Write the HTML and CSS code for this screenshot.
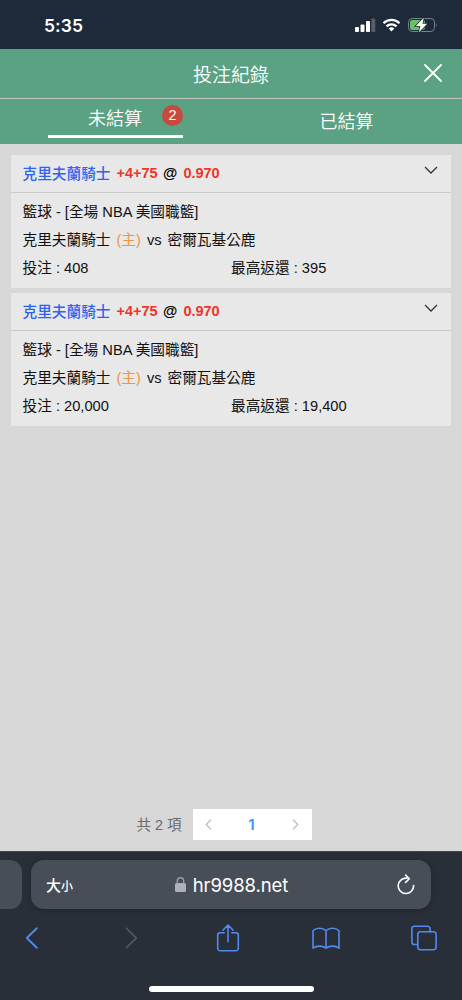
FILE: index.html
```html
<!DOCTYPE html>
<html lang="zh-Hant">
<head>
<meta charset="utf-8">
<title>投注紀錄</title>
<link rel="stylesheet" href="styles.css">
</head>
<body>
<div class="phone">
  <div class="status">
    <span class="clock">5:35</span>
    <svg class="status-icons" width="84" height="18" viewBox="0 0 84 18">
      <g fill="#fff">
        <rect x="1" y="11" width="4" height="5" rx="1"/>
        <rect x="6.500" y="8.500" width="4" height="7.500" rx="1"/>
        <rect x="12" y="5" width="4" height="11" rx="1"/>
        <rect x="17.300" y="2.500" width="4" height="13.500" rx="1" opacity=".25"/>
      </g>
      <g fill="none" stroke="#fff" stroke-width="2.300">
        <path d="M29.500 7.200A11.300 11.300 0 0 1 45.500 7.200"/>
        <path d="M32.500 10.400A7.100 7.100 0 0 1 42.500 10.400"/>
      </g>
      <path d="M34.700 12.500Q37.500 10.200 40.300 12.500L37.500 15.500Z" fill="#fff"/>
      <rect x="54.500" y="2.500" width="26" height="13" rx="3.800" fill="none" stroke="#7b838d"/>
      <path d="M82.300 7Q83.800 9 82.300 11Z" fill="#7b838d"/>
      <rect x="56" y="4" width="15" height="10" rx="2.300" fill="#65c466"/>
      <path d="M69.800 1.700L61.800 10H66.300L64.900 16.300L73.200 7.800H68.500Z" fill="#fff" stroke="#1e2a3a" stroke-width="1.600" paint-order="stroke"/>
    </svg>
  </div>
  <header class="header">
    <h1 class="title">投注紀錄</h1>
    <svg class="close" width="18" height="18" viewBox="0 0 18 18"><path d="M1 1L17 17M17 1L1 17"/></svg>
  </header>
  <nav class="tabs">
    <div class="tab active"><span>未結算</span><b class="badge">2</b></div>
    <div class="tab"><span>已結算</span></div>
  </nav>
  <main class="content">
    <article class="card">
      <div class="card-head">
        <span class="team">克里夫蘭騎士</span><span class="odds">+4+75</span><span class="at">@</span><span class="odds">0.970</span>
        <svg class="chevron" width="14" height="8" viewBox="0 0 14 8"><path d="M1 1L7 7L13 1"/></svg>
      </div>
      <div class="card-body">
        <div class="row">籃球 - [全場 NBA 美國職籃]</div>
        <div class="row match"><span>克里夫蘭騎士</span><span class="home">(主)</span><span>vs</span><span>密爾瓦基公鹿</span></div>
        <div class="row amounts"><span>投注 : 408</span><span>最高返還 : 395</span></div>
      </div>
    </article>
    <article class="card">
      <div class="card-head">
        <span class="team">克里夫蘭騎士</span><span class="odds">+4+75</span><span class="at">@</span><span class="odds">0.970</span>
        <svg class="chevron" width="14" height="8" viewBox="0 0 14 8"><path d="M1 1L7 7L13 1"/></svg>
      </div>
      <div class="card-body">
        <div class="row">籃球 - [全場 NBA 美國職籃]</div>
        <div class="row match"><span>克里夫蘭騎士</span><span class="home">(主)</span><span>vs</span><span>密爾瓦基公鹿</span></div>
        <div class="row amounts"><span>投注 : 20,000</span><span>最高返還 : 19,400</span></div>
      </div>
    </article>
    <div class="pagination">
      <span class="total">共 2 項</span>
      <div class="pager">
        <svg width="7" height="11" viewBox="0 0 7 11"><path d="M6 .8L1.200 5.500L6 10.200"/></svg>
        <b class="page">1</b>
        <svg width="7" height="11" viewBox="0 0 7 11"><path d="M1 .8L5.800 5.500L1 10.200"/></svg>
      </div>
    </div>
  </main>
  <footer class="browser">
    <div class="address-row">
      <div class="prev-tab"></div>
      <div class="address">
        <span class="text-size">大<small>小</small></span>
        <span class="url">
          <svg width="11" height="15" viewBox="0 0 11 15"><rect x="0" y="6" width="11" height="9" rx="1.500" fill="#aeb0ba"/><path d="M2.300 7V4.200a3.200 3.400 0 0 1 6.400 0V7" fill="none" stroke="#9a9da6" stroke-width="1.400"/></svg>
          <span>hr9988.net</span>
        </span>
        <svg class="reload" width="18" height="21" viewBox="0 0 18 21"><path d="M10 4.200A7.700 7.700 0 1 0 16.600 11.500M8.600 1L12.300 4.700L8.600 8.400"/></svg>
      </div>
    </div>
    <div class="toolbar">
      <div class="tool"><svg width="14" height="22" viewBox="0 0 14 22"><path d="M11.800 1.300L1.800 11L11.800 20.700"/></svg></div>
      <div class="tool disabled"><svg width="14" height="22" viewBox="0 0 14 22"><path d="M3.500 1.300L13.200 11L3.500 20.700"/></svg></div>
      <div class="tool thin"><svg width="24" height="30" viewBox="0 0 24 30"><path d="M8.200 9.800H4.200a2.500 2.500 0 0 0-2.500 2.500V25.200a2.500 2.500 0 0 0 2.500 2.500H19.800a2.500 2.500 0 0 0 2.500-2.500V12.300a2.500 2.500 0 0 0-2.500-2.500H15.800M12 18.700V2.300M6.800 7.300L12 2.100L17.200 7.300"/></svg></div>
      <div class="tool thin"><svg width="28" height="24" viewBox="0 0 28 24"><path d="M14 4.700C11 1.400 4.200 1.300 1 4.700V22.200C4.600 19.500 10.400 19.300 14 22.200C17.600 19.300 23.400 19.500 27 22.200V4.700C23.800 1.300 17 1.400 14 4.700ZM14 4.700V22.200"/></svg></div>
      <div class="tool thin"><svg width="26" height="26" viewBox="0 0 26 26"><rect x="6.800" y="6.700" width="18.300" height="18" rx="2.700"/><path d="M6.800 19.500H3.500A2.600 2.600 0 0 1 .9 16.900V3.800A2.600 2.600 0 0 1 3.500 1.200H16.500A2.600 2.600 0 0 1 19.100 3.800V6.700"/></svg></div>
    </div>
    <div class="home-indicator"></div>
  </footer>
</div>
</body>
</html>
```
FILE: styles.css
```css
* { box-sizing: border-box; }
body { margin: 0; font-family: "Liberation Sans", "Noto Sans CJK TC", sans-serif; }
svg { display: block; flex: none; }
.phone { width: 462px; height: 1000px; display: flex; flex-direction: column; overflow: hidden; background: #d7d7d7; }

.status { height: 49px; flex: none; display: flex; justify-content: space-between; align-items: center; padding: 1px 24px 0 44px; background: #1e2a3a; color: #fff; }
.clock { font: 600 17.500px/24px Inter, sans-serif; letter-spacing: .1px; padding-top: 1px; }

.header { height: 50px; flex: none; display: grid; grid-template-columns: 1fr auto 1fr; align-items: center; padding: 0 20px 2px; background: #5ba183; border-bottom: 1px solid #b9c5be; color: #fff; }
.title { grid-column: 2; margin: 0; font: 350 19px/28px "Noto Sans CJK TC", sans-serif; padding-top: 2px; }
.close { justify-self: end; fill: none; stroke: #fff; stroke-width: 1.800; stroke-linecap: round; }

.tabs { height: 45px; flex: none; display: grid; grid-template-columns: 1fr 1fr; background: #5ba183; color: #fff; font: 350 18px/26px "Noto Sans CJK TC", sans-serif; }
.tab { display: flex; justify-content: center; align-items: center; padding-bottom: 3px; }
.tab.active { width: 135px; height: 39px; justify-self: center; justify-content: flex-end; gap: 20px; border-bottom: 3px solid #fff; align-items: flex-start; padding: 5px 0 0; }
.badge { width: 21px; height: 21px; margin-top: 1px; border-radius: 50%; background: #c9493e; font: 400 14.500px/21px "Liberation Sans", sans-serif; text-align: center; }

.content { flex: 1; display: flex; flex-direction: column; gap: 5px; padding: 11px; }
.card { height: 133px; background: #e8e8e8; font-size: 14.670px; color: #111; }
.card-head { height: 38px; display: flex; align-items: center; gap: 6px; padding: 0 13px 2px 11.500px; border-bottom: 1px solid #cacaca; font-weight: 700; }
.team { color: #2c63f0; font-weight: 500; }
.odds { color: #ee3427; font-size: 14.500px; }
.at { color: #000; font-weight: 700; margin-left: -.5px; }
.chevron { margin: -6px 0 0 auto; fill: none; stroke: #333; stroke-width: 1.300; }
.card-body { padding: 5px 11.500px 0; }
.row { height: 28px; line-height: 28px; white-space: nowrap; }
.match { display: flex; gap: 6px; }
.home { color: #f0943f; }
.amounts { display: grid; grid-template-columns: 1fr 1fr; }

.pagination { display: flex; align-items: center; justify-content: center; gap: 11px; margin-top: auto; padding-right: 14px; }
.total { font-size: 14.500px; color: #686a6e; padding-bottom: 3px; }
.pager { width: 119px; height: 31px; display: flex; align-items: center; justify-content: space-between; padding: 0 13px 0 12px; background: #fff; fill: none; stroke: #b8bac0; stroke-width: 1.200; }
.page { color: #4d94fa; font: 700 14px/20px Inter, sans-serif; }

.browser { height: 149px; flex: none; background: #282f38; border-top: 1px solid #404850; }
.address-row { display: flex; gap: 9px; padding-top: 8px; }
.prev-tab { width: 22px; height: 49px; background: #474e58; border-radius: 0 12px 12px 0; }
.address { width: 400px; height: 49px; display: grid; grid-template-columns: 1fr auto 1fr; align-items: center; padding: 0 16px 0 15px; border-radius: 13px; background: #474e58; box-shadow: 0 1px 5px #20262e; color: #fff; }
.text-size { font: 500 15px/24px "Noto Sans CJK TC", sans-serif; padding-top: 1px; }
.text-size small { font-size: 12px; }
.url { display: flex; align-items: center; gap: 7px; padding: 1px 0 0 2px; font: 400 18.500px/24px Inter, sans-serif; letter-spacing: -.1px; }
.url svg { margin-top: -2px; }
.reload { justify-self: end; fill: none; stroke: #fff; stroke-width: 1.600; stroke-linecap: round; stroke-linejoin: round; }
.toolbar { height: 58px; display: flex; justify-content: space-between; align-items: center; padding: 0 24px 1px 18px; fill: none; stroke: #5189ee; stroke-width: 1.900; stroke-linecap: round; stroke-linejoin: round; }
.tool { width: 28px; display: flex; justify-content: center; }
.disabled { stroke: #50545b; }
.thin { stroke-width: 1.600; }
.home-indicator { width: 165px; height: 6px; margin: 19px auto 0; border-radius: 3px; background: #fff; }
```
